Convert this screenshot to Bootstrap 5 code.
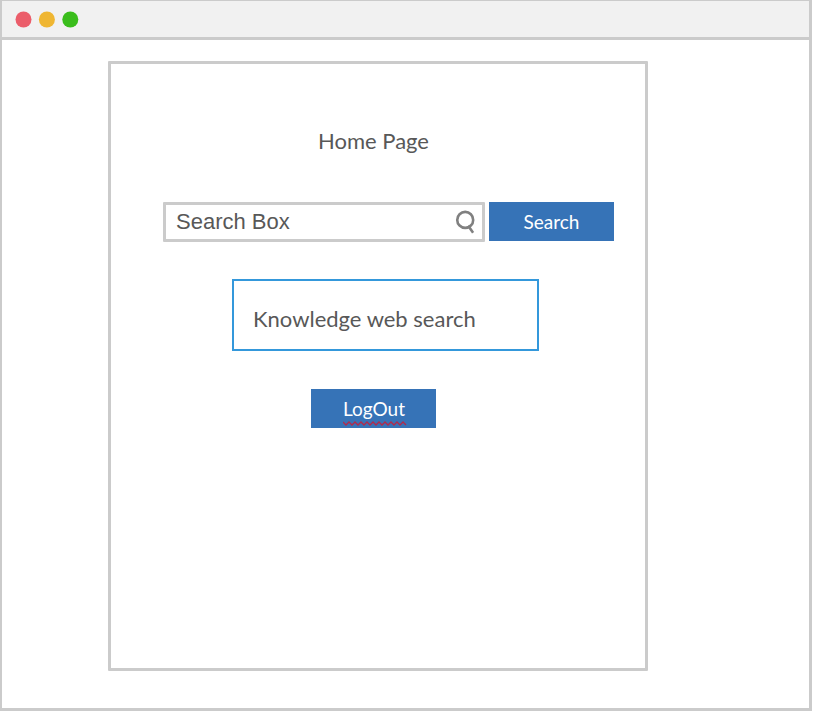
<!DOCTYPE html>
<html lang="en">
<head>
<meta charset="utf-8">
<meta name="viewport" content="width=device-width, initial-scale=1">
<title>Home Page</title>
<link href="https://cdn.jsdelivr.net/npm/bootstrap@5.3.0/dist/css/bootstrap.min.css" rel="stylesheet">
<style>
body { background: #fff; font-family: Lato, sans-serif; color: #585858; }
.window { width: 812px; height: 711px; border: 3px solid #cbcbcb; border-left-width: 2px; border-top-width: 1px; }
.titlebar { height: 39px; background: #f1f1f1; border-bottom: 3px solid #cbcbcb; padding: 1px 0 0 13px; }
.panel { width: 540px; height: 610px; margin: 21px 0 0 106px; border: 3px solid #cbcbcb; border-radius: 1px; }
.heading { font-size: 22px; line-height: 30px; margin: 62px 0 0 207px; }
.search-row { margin: 46px 0 0 52px; gap: 4px; }
.search-field { width: 322px; height: 40px; border: 3px solid #cbcbcb; border-radius: 1px; padding: 0 6px 0 10px; }
.search-field input { font: 22px/30px "Liberation Sans", Arial, sans-serif; color: #585858; min-width: 0; outline: 0; }
.search-field input::placeholder { color: #585858; opacity: 1; }
.btn-block-blue { --bs-btn-color: #fff; --bs-btn-bg: #3673b7; --bs-btn-hover-color: #fff; --bs-btn-hover-bg: #2d64a1; --bs-btn-active-color: #fff; --bs-btn-active-bg: #2d64a1; --bs-btn-font-size: 19px; width: 125px; height: 39px; line-height: 37px; }
.result { width: 307px; height: 72px; margin: 37px 0 0 121px; padding: 7px 0 0 19px; border: 2px solid #3498db; font-size: 22px; }
.logout { margin: 38px 0 0 200px; }
.logout span { margin-left: 1px; }
.squiggle { left: 0; bottom: 1px; }
</style>
</head>
<body>
<div class="window overflow-hidden">
  <header class="titlebar d-flex align-items-center">
    <svg width="66" height="18" viewBox="0 0 66 18" aria-hidden="true">
      <circle cx="8.5" cy="8.5" r="8" fill="#eb5d6a"/>
      <circle cx="31.9" cy="8.5" r="8" fill="#efb632"/>
      <circle cx="55.3" cy="8.5" r="8" fill="#3abd1c"/>
    </svg>
  </header>
  <main class="panel d-flex flex-column align-items-start">
    <h1 class="heading fw-normal">Home Page</h1>
    <form class="search-row d-flex mb-0">
      <label class="search-field d-flex align-items-center">
        <input class="flex-grow-1 border-0 p-0 bg-transparent" type="text" placeholder="Search Box" aria-label="Search Box">
        <svg width="24" height="26" viewBox="0 0 24 26" fill="none" stroke="#808080" stroke-width="2.7" aria-hidden="true">
          <circle cx="12.7" cy="10.8" r="8.3"/>
          <path d="M15.8 16.8L20.9 24.2"/>
        </svg>
      </label>
      <button class="btn btn-block-blue rounded-0 border-0 p-0" type="button">Search</button>
    </form>
    <div class="result d-flex align-items-center">Knowledge web search</div>
    <button class="logout btn btn-block-blue rounded-0 border-0 p-0" type="button"><span class="position-relative d-inline-block">LogOut<svg class="squiggle position-absolute" width="64" height="5" viewBox="0 0 64 5" fill="none" stroke="#b02a4c" stroke-width="1.4" aria-hidden="true"><path d="M0 1l3 3 3-3 3 3 3-3 3 3 3-3 3 3 3-3 3 3 3-3 3 3 3-3 3 3 3-3 3 3 3-3 3 3 3-3 3 3 3-3 3 3"/></svg></span></button>
  </main>
</div>
<script src="https://cdn.jsdelivr.net/npm/bootstrap@5.3.0/dist/js/bootstrap.bundle.min.js"></script>
</body>
</html>
